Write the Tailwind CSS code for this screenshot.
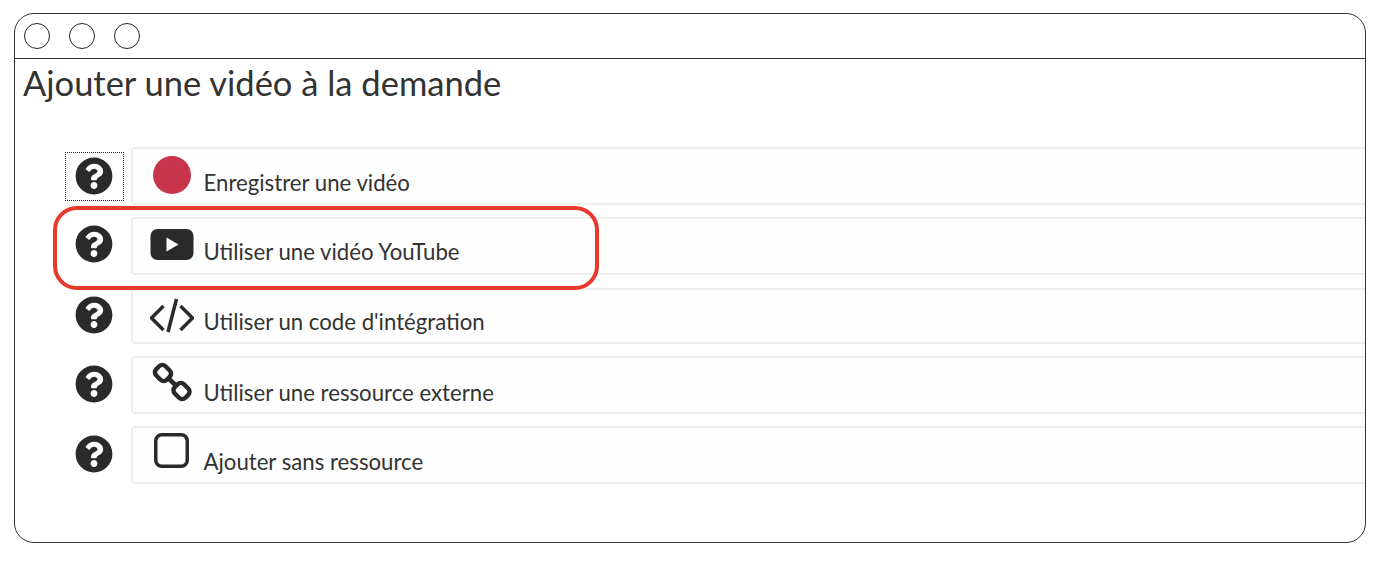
<!DOCTYPE html>
<html lang="fr">
<head>
  <meta charset="UTF-8" />
  <title>Ajouter une vidéo à la demande</title>
  <script src="https://cdn.jsdelivr.net/npm/@tailwindcss/browser@4"></script>
</head>
<body class="bg-white h-[564px] overflow-hidden pt-[13px] pl-[14px] font-['Lato',sans-serif] text-[#333]">
  <svg class="hidden">
    <symbol id="help" viewBox="0 0 512 512"><path fill="#2a2a2a" d="M504 256c0 136.997-111.043 248-248 248S8 392.997 8 256C8 119.083 119.043 8 256 8s248 111.083 248 248zM262.655 90c-54.497 0-89.255 22.957-116.549 63.758-3.536 5.286-2.353 12.415 2.715 16.258l34.699 26.31c5.205 3.947 12.621 3.008 16.665-2.122 17.864-22.658 30.113-35.797 57.303-35.797 20.429 0 45.698 13.148 45.698 32.958 0 14.976-12.363 22.667-32.534 33.976C247.128 238.528 216 254.941 216 296v4c0 6.627 5.373 12 12 12h56c6.627 0 12-5.373 12-12v-1.333c0-28.462 83.186-29.647 83.186-106.667 0-58.002-60.165-102-116.531-102zM256 338c-25.365 0-46 20.635-46 46 0 25.364 20.635 46 46 46s46-20.636 46-46c0-25.365-20.635-46-46-46z"/></symbol>
  </svg>

  <div class="relative w-[1352px] h-[530px] border-[1.5px] border-[#333] rounded-[20px] overflow-hidden">
    <!-- barre de fenetre -->
    <div class="flex items-center gap-[19px] h-[45px] pl-[8.5px] border-b-[1.5px] border-[#333]">
      <span class="w-[26px] h-[26px] rounded-full border border-[#222]"></span>
      <span class="w-[26px] h-[26px] rounded-full border border-[#222]"></span>
      <span class="w-[26px] h-[26px] rounded-full border border-[#222]"></span>
    </div>

    <h1 class="ml-[8px] mt-[2px] h-[86px] text-[34.5px] leading-[44px] font-normal">Ajouter une vidéo à la demande</h1>

    <div class="flex flex-col gap-[12px] pl-[49.5px]">
      <!-- enregistrer -->
      <div class="flex items-center h-[58px]">
        <div class="flex items-center justify-center w-[59px] h-[49px] mt-[1px] mr-[7px] border-[1.5px] border-dotted border-[#222]">
          <svg class="w-[38px] h-[38px] -mt-[1px]"><use href="#help"/></svg>
        </div>
        <div class="flex flex-1 h-full pl-[17px] bg-[#fefefe] border-2 border-r-0 border-[#eeeeee] rounded-l-[4px]">
          <svg class="w-[44px] h-[54px] shrink-0" viewBox="0 0 44 54"><circle cx="22" cy="26" r="19" fill="#c8344a"/></svg>
          <span class="ml-[10px] mt-[20px] text-[22.2px] leading-[28px]">Enregistrer une vidéo</span>
        </div>
      </div>

      <!-- youtube -->
      <div class="flex items-center h-[58px]">
        <div class="flex items-center justify-center w-[59px] mr-[7px]">
          <svg class="w-[38px] h-[38px] -mt-[4px]"><use href="#help"/></svg>
        </div>
        <div class="flex flex-1 h-full pl-[17px] bg-[#fefefe] border-2 border-r-0 border-[#eeeeee] rounded-l-[4px]">
          <svg class="w-[44px] h-[54px] shrink-0" viewBox="0 0 44 54"><rect x="0.5" y="10" width="43" height="31" rx="7" fill="#2a2a2a"/><path d="M16.5 18.5 28.5 25.5 16.5 32.5z" fill="#fff"/></svg>
          <span class="ml-[10px] mt-[19px] text-[22.2px] leading-[28px]">Utiliser une vidéo YouTube</span>
        </div>
      </div>

      <!-- code -->
      <div class="flex items-center h-[56px] mt-px">
        <div class="flex items-center justify-center w-[59px] mr-[7px]">
          <svg class="w-[38px] h-[38px] -mt-[2px]"><use href="#help"/></svg>
        </div>
        <div class="flex flex-1 h-full pl-[17px] bg-[#fefefe] border-2 border-r-0 border-[#eeeeee] rounded-l-[4px]">
          <svg class="w-[44px] h-[52px] shrink-0" viewBox="0 0 44 52" fill="none" stroke="#2a2a2a" stroke-width="3.5"><path d="M13.500 16 1.500 28 13.500 40M30.500 16 42.500 28 30.500 40M26.500 9 18 42"/></svg>
          <span class="ml-[10px] mt-[18px] text-[22.2px] leading-[28px]">Utiliser un code d'intégration</span>
        </div>
      </div>

      <!-- ressource externe -->
      <div class="flex items-center h-[58px]">
        <div class="flex items-center justify-center w-[59px] mr-[7px]">
          <svg class="w-[38px] h-[38px] -mt-[2px]"><use href="#help"/></svg>
        </div>
        <div class="flex flex-1 h-full pl-[17px] bg-[#fefefe] border-2 border-r-0 border-[#eeeeee] rounded-l-[4px]">
          <svg class="w-[44px] h-[54px] shrink-0" viewBox="0 0 44 54" fill="none" stroke="#2a2a2a" stroke-width="4.500"><rect x="5.500" y="8.500" width="15" height="13" rx="4.500" transform="rotate(45 13 15)"/><rect x="24" y="26.500" width="15" height="13" rx="4.500" transform="rotate(45 31.500 33)"/><path d="M18 20 26.500 28"/></svg>
          <span class="ml-[10px] mt-[21px] text-[22.2px] leading-[28px]">Utiliser une ressource externe</span>
        </div>
      </div>

      <!-- sans ressource -->
      <div class="flex items-center h-[58px]">
        <div class="flex items-center justify-center w-[59px] mr-[7px]">
          <svg class="w-[38px] h-[38px] -mt-[2px]"><use href="#help"/></svg>
        </div>
        <div class="flex flex-1 h-full pl-[17px] bg-[#fefefe] border-2 border-r-0 border-[#eeeeee] rounded-l-[4px]">
          <svg class="w-[44px] h-[54px] shrink-0" viewBox="0 0 44 54"><rect x="5.750" y="6.750" width="31.500" height="31.500" rx="6" fill="none" stroke="#2a2a2a" stroke-width="3.5"/></svg>
          <span class="ml-[10px] mt-[20px] text-[22.2px] leading-[28px]">Ajouter sans ressource</span>
        </div>
      </div>
    </div>

    <!-- encadre rouge -->
    <div class="absolute left-[38px] top-[192px] w-[546px] h-[84px] border-4 border-[#e8392b] rounded-[24px]"></div>
  </div>
</body>
</html>
